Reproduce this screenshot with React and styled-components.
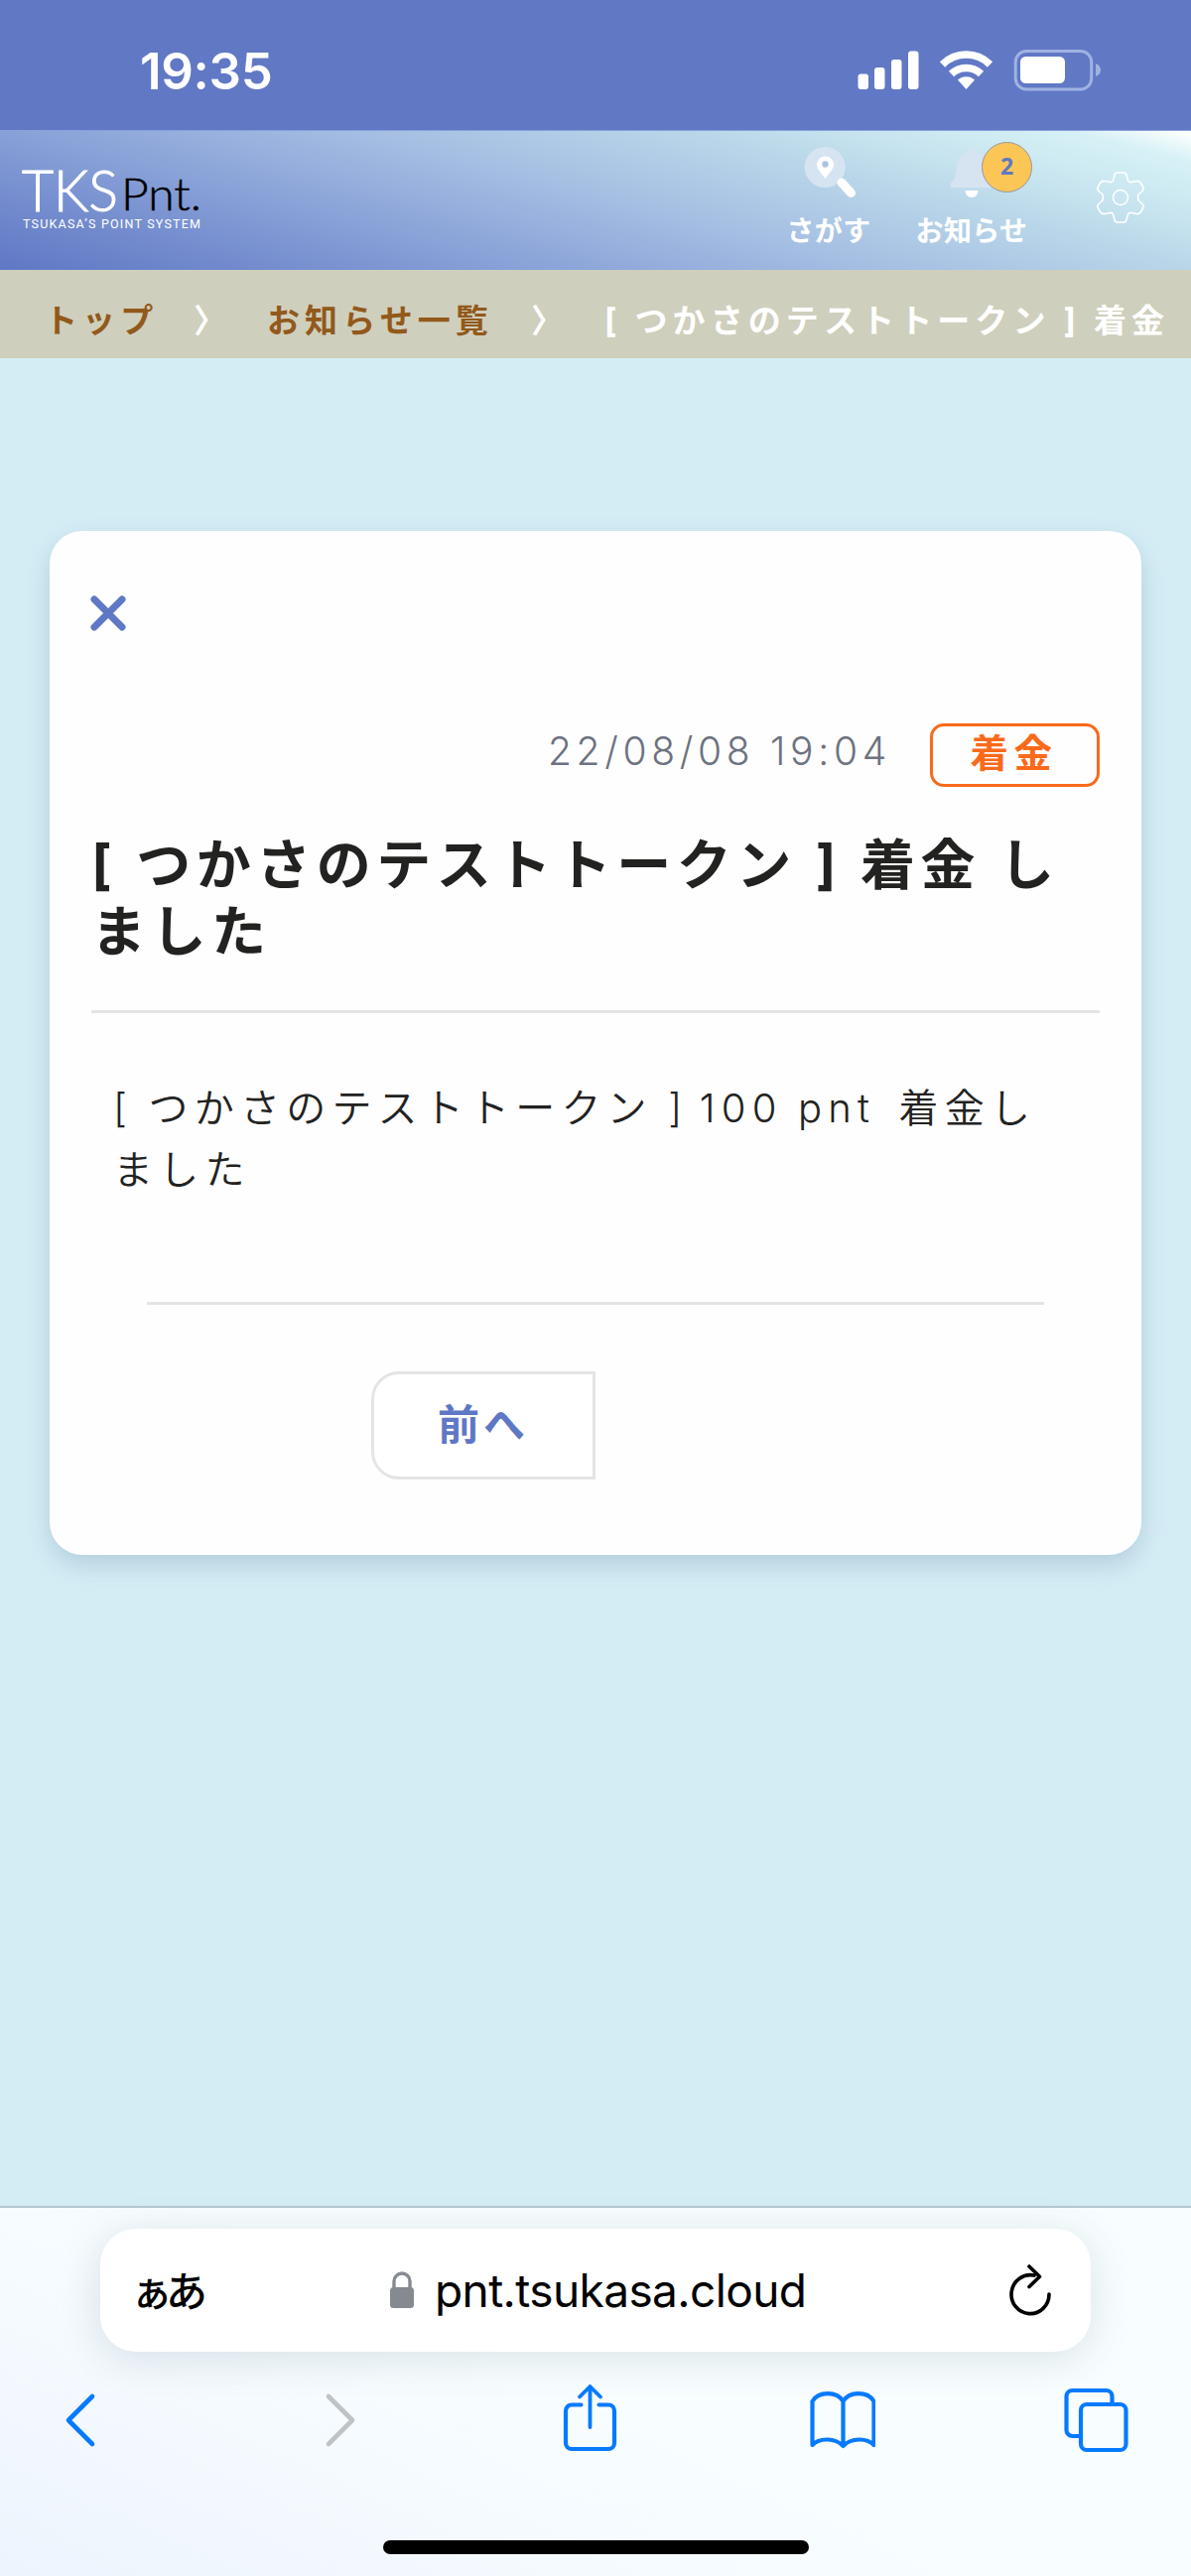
import React from "react";
import styled, { createGlobalStyle } from "styled-components";

const App = () => {
	return (
		<Page>
			<GlobalStyle />
			<StatusBar>
				<Clock>19:35</Clock>
				<StatusIcons />
			</StatusBar>

			<Header>
				<Logo />
				<Menu>
					<MenuItem width={80}>
						<SearchIcon />
						<MenuLabel>さがす</MenuLabel>
					</MenuItem>
					<MenuItem width={112}>
						<BellIcon />
						<MenuLabel>お知らせ</MenuLabel>
						<Count>2</Count>
					</MenuItem>
					<GearIcon />
				</Menu>
			</Header>

			<Breadcrumb>
				<Crumb width={150}>トップ</Crumb>
				<Crumb width={74} light>〉</Crumb>
				<Crumb width={266}>お知らせ一覧</Crumb>
				<Crumb width={74} light>〉</Crumb>
				<Crumb light>[ つかさのテストトークン ] 着金</Crumb>
			</Breadcrumb>

			<Main>
				<Card>
					<Close width="36" height="36" viewBox="0 0 36 36">
						<path d="M4 4L32 32M32 4L4 32" />
					</Close>
					<Meta>
						<DateText>22/08/08 19:04</DateText>
						<Tag>着金</Tag>
					</Meta>
					<Title>
						[ つかさのテストトークン ] 着金 し
						<br />
						ました
					</Title>
					<Body>
						[ つかさのテストトークン ] <Amount>100 pnt</Amount> 着金し
						<br />
						ました
					</Body>
					<Divider />
					<Pager>
						<PrevButton>前へ</PrevButton>
					</Pager>
				</Card>
			</Main>

			<Browser>
				<AddressBar>
					<TextSize>ぁあ</TextSize>
					<Address>
						<svg width="26" height="38" viewBox="0 0 26 38">
							<path d="M5 18V10a8 8 0 0 1 16 0v8" fill="none" stroke="#858a91" strokeWidth="3.4" />
							<rect x="1" y="16" width="24" height="21" rx="3.5" fill="#858a91" />
						</svg>
						<Url>pnt.tsukasa.cloud</Url>
					</Address>
					<svg width="46" height="54" viewBox="0 0 46 54">
						<Stroke d="M27 12.1A19 19.5 0 1 0 42 31M22 3L32.5 13.2L22 23.5" color="#000" weight={3.6} />
					</svg>
				</AddressBar>
				<Toolbar>
					<svg width="66" height="72" viewBox="-16 -1 66 72">
						<Stroke d="M29 13L5 37L29 61" weight={4.6} />
					</svg>
					<svg width="66" height="72" viewBox="-22 -1 66 72">
						<Stroke d="M5 13L29 37L5 61" color="#bfc3c5" weight={4.6} />
					</svg>
					<svg width="66" height="72" viewBox="-6.500 0 66 72">
						<Stroke d="M19 22.5H9.5a6 6 0 0 0-6 6V61a6 6 0 0 0 6 6h37a6 6 0 0 0 6-6V28.5a6 6 0 0 0-6-6H37" />
						<Stroke d="M28 45V4M17.5 14.5L28 4L38.5 14.5" weight={3.8} />
					</svg>
					<svg width="66" height="72" viewBox="1.500 0 66 72">
						<Stroke d="M35 19C29 8.5 10 8.5 4 19V63C11 55.500 27 55.500 35 64C43 55.500 59 55.500 66 63V19C60 8.500 41 8.500 35 19V64" />
					</svg>
					<svg width="66" height="72" viewBox="0.500 0 66 72">
						<Stroke d="M17 54H9a6 6 0 0 1-6-6V14a6 6 0 0 1 6-6H43a6 6 0 0 1 6 6V22" />
						<Stroke d="M23.500 22H57a6 6 0 0 1 6 6V62a6 6 0 0 1-6 6H23.500a6 6 0 0 1-6-6V28a6 6 0 0 1 6-6Z" />
					</svg>
				</Toolbar>
				<HomeBar />
			</Browser>
		</Page>
	);
};

export default App;

const StatusIcons = () => (
	<svg width="250" height="44" viewBox="864 49 250 44">
		<g fill="#fff">
			<rect x="864.500" y="74.500" width="10.500" height="15.500" rx="3" />
			<rect x="881" y="68" width="10.500" height="22" rx="3" />
			<rect x="898" y="60" width="10.500" height="30" rx="3" />
			<rect x="915" y="51.500" width="10.500" height="38.500" rx="3" />
			<path d="M973.500 90L965 80.500a12.500 12.500 0 0 1 17 0Z" />
			<rect x="1028" y="57" width="45" height="27" rx="5.500" />
		</g>
		<g fill="none" stroke="#fff" strokeWidth="7.500">
			<path d="M949.500 65a34 34 0 0 1 48 0" />
			<path d="M958.500 74.500a21.500 21.500 0 0 1 30 0" />
		</g>
		<rect x="1023.200" y="51.500" width="76.500" height="38.500" rx="11" fill="none" stroke="#a0b2e2" strokeWidth="3" />
		<path d="M1104 64v13q5-2 5-6.500t-5-6.500Z" fill="#a0b2e2" />
	</svg>
);

const Logo = () => (
	<LogoSvg width="184" height="66" viewBox="22 168 184 66">
		<LogoText x="22" y="213" size={57} textLength="97" lengthAdjust="spacingAndGlyphs" fill="#fff" stroke="#fff">
			TKS
		</LogoText>
		<LogoText x="122" y="212" size={45} textLength="81" lengthAdjust="spacingAndGlyphs" fill="#000" stroke="#000" strokeWidth="0.5">
			Pnt.
		</LogoText>
		<LogoText x="23" y="230" size={12.5} small textLength="179" fill="#fff">
			TSUKASA’S POINT SYSTEM
		</LogoText>
	</LogoSvg>
);

const SearchIcon = () => (
	<svg width="54" height="54" viewBox="808.500 147 54 54">
		<circle cx="831.700" cy="168.500" r="20.500" fill="#d6e4f2" />
		<path d="M848.500 184L858 194.500" stroke="#fff" strokeWidth="9" strokeLinecap="round" />
		<path
			d="M832 180C828 174 823.500 170.500 823.500 166a8.500 8.500 0 0 1 17 0C840.500 170.500 836 174 832 180Z"
			fill="#fff"
		/>
		<circle cx="832" cy="165.500" r="3.200" fill="#aac4e0" />
	</svg>
);

const BellIcon = () => (
	<svg width="54" height="54" viewBox="953 147 54 54">
		<path
			d="M980 148.500a3.500 3.500 0 0 1 3.500 4.500C991 155 995 161 995.500 170C996 179 998 182 1001 184.500V189H959V184.500C962 182 964 179 964.500 170C965 161 969 155 976.500 153a3.500 3.500 0 0 1 3.500-4.500Z"
			fill="#d6e4f2"
		/>
		<path d="M973.500 192h13a6.500 7 0 0 1-13 0Z" fill="#fff" />
	</svg>
);

const GearIcon = () => (
	<svg width="52" height="54" viewBox="-26 -27 52 54" fill="none" stroke="#fff" strokeWidth="1.600" strokeLinejoin="round">
		<path d="M-3-25H3Q5.500-25 6-22.500L7.500-17Q8.500-15 11-15.500L16-16.500Q19-17 20.500-14.500L22.500-11Q24-8.500 22-6.500L18-3Q17 0 18 3L22 6.500Q24 8.500 22.500 11L20.500 14.500Q19 17 16 16.500L11 15.500Q8.500 15 7.500 17L6 22.500Q5.500 25 3 25H-3Q-5.500 25-6 22.500L-7.500 17Q-8.500 15-11 15.500L-16 16.500Q-19 17-20.500 14.500L-22.500 11Q-24 8.500-22 6.500L-18 3Q-17 0-18-3L-22-6.500Q-24-8.500-22.500-11L-20.500-14.500Q-19-17-16-16.500L-11-15.500Q-8.500-15-7.500-17L-6-22.500Q-5.500-25-3-25Z" />
		<circle r="7.500" />
	</svg>
);

const GlobalStyle = createGlobalStyle`
	* {
		box-sizing: border-box;
	}

	body {
		margin: 0;
		font-family: "Inter", "Noto Sans CJK JP", sans-serif;
	}

	svg {
		display: block;
		flex-shrink: 0;
	}
`;

const Page = styled.div`
	width: 1200px;
	height: 2596px;
	display: flex;
	flex-direction: column;
	overflow: hidden;
	background-color: #d4edf5;
`;

const StatusBar = styled.div`
	height: 132px;
	padding: 49px 86px 0 141px;
	display: flex;
	justify-content: space-between;
	align-items: flex-start;
	background-color: #6178c5;
	border-bottom: 1px solid #8aa0dc;
`;

const Clock = styled.div`
	color: white;
	font-size: 51px;
	font-weight: 600;
	line-height: 46px;
	letter-spacing: -0.3px;
`;

const Header = styled.div`
	height: 140px;
	padding: 36px 45px 0 22px;
	display: flex;
	justify-content: space-between;
	align-items: flex-start;
	background: linear-gradient(
		15deg,
		#6078c5 0%,
		#6c84ca 10%,
		#87a0d7 30%,
		#a3bce2 50%,
		#b9d6e9 70%,
		#cdeaf2 85%,
		#d6f1f6 93%,
		#fff 100%
	);
`;

const LogoSvg = styled.svg`
	overflow: visible;
`;

const LogoText = styled.text.withConfig({
	shouldForwardProp: (prop) => !["size", "small"].includes(prop),
})`
	font-family: ${({ small }) => (small ? "Roboto" : "Lato")}, sans-serif;
	font-size: ${({ size }) => size}px;
	font-weight: ${({ small }) => (small ? 400 : 300)};
`;

const Menu = styled.div`
	display: flex;
	align-items: center;
	margin-top: -21px;
	gap: 48px;

	> svg {
		margin: -2px 0 0 20px;
	}
`;

const MenuItem = styled.div.withConfig({
	shouldForwardProp: (prop) => prop !== "width",
})`
	position: relative;
	width: ${({ width }) => width}px;
	display: flex;
	flex-direction: column;
	align-items: center;
`;

const MenuLabel = styled.div`
	margin-top: 12px;
	color: white;
	font-size: 28px;
	font-weight: 700;
	line-height: 40px;
	white-space: nowrap;
	letter-spacing: 0.4px;
`;

const Count = styled.div`
	position: absolute;
	top: -4px;
	left: 66px;
	width: 51px;
	height: 51px;
	border: 1px solid #9a95a0;
	border-radius: 50%;
	background-color: #fbc656;
	color: #5f78c5;
	font-family: "Open Sans", sans-serif;
	font-size: 23px;
	font-weight: 700;
	line-height: 46px;
	text-align: center;
`;

const Breadcrumb = styled.div`
	height: 89px;
	padding-left: 45px;
	display: flex;
	align-items: center;
	background-color: #cfcfbd;
`;

const Crumb = styled.span.withConfig({
	shouldForwardProp: (prop) => !["width", "light"].includes(prop),
})`
	flex-shrink: 0;
	padding-top: 8px;
	width: ${({ width }) => (width ? `${width}px` : "auto")};
	color: ${({ light }) => (light ? "#fff" : "#92591b")};
	font-size: 33px;
	font-weight: 700;
	letter-spacing: 5.1px;
	white-space: nowrap;
`;

const Main = styled.div`
	flex: 1;
	padding: 174px 50px 0;
`;

const Card = styled.div`
	height: 1032px;
	padding: 65px 42px 0;
	border-radius: 33px;
	background-color: #fefefe;
	box-shadow: 0 10px 24px rgba(80, 110, 150, 0.24);
`;

const Close = styled.svg`
	margin-left: -1px;
	fill: none;
	stroke: #5f78c5;
	stroke-width: 7px;
	stroke-linecap: round;
`;

const Meta = styled.div`
	margin-top: 93px;
	display: flex;
	justify-content: flex-end;
	align-items: center;
	gap: 39px;
`;

const DateText = styled.div`
	margin-top: -9px;
	color: #6c7280;
	font-size: 39px;
	font-weight: 300;
	letter-spacing: 4.7px;
`;

const Tag = styled.div`
	width: 171px;
	height: 64px;
	padding-right: 2px;
	border: 3px solid #f96a1b;
	border-radius: 14px;
	color: #f96a1b;
	font-size: 38.500px;
	font-weight: 700;
	line-height: 54px;
	letter-spacing: 5.500px;
	text-align: center;
`;

const Title = styled.h2`
	margin: 0;
	height: 228px;
	padding: 45px 0 0 0;
	border-bottom: 3px solid #e4e4e4;
	color: #222221;
	font-size: 55px;
	font-weight: 700;
	line-height: 67px;
	letter-spacing: 5.500px;
	word-spacing: 0.500px;
	white-space: nowrap;
`;

const Body = styled.div`
	height: 293px;
	padding: 65px 0 0 22px;
	color: #222221;
	font-size: 40px;
	font-weight: 350;
	line-height: 62px;
	letter-spacing: 6.200px;
	word-spacing: -2px;
	white-space: nowrap;
`;

const Amount = styled.span`
	margin: 0 8px 0 -4px;
`;

const Divider = styled.div`
	height: 3px;
	margin: -2px 56px 0;
	background-color: #e4e4e4;
`;

const Pager = styled.div`
	padding: 67px 0 0 282px;
	display: flex;
`;

const PrevButton = styled.button`
	width: 226px;
	height: 109px;
	padding: 0 0 8px;
	border: 3px solid #e4e4e4;
	border-radius: 28px 0 0 28px;
	background-color: white;
	color: #5f78c5;
	font-family: inherit;
	font-size: 42px;
	font-weight: 700;
	letter-spacing: 4px;
`;

const Browser = styled.div`
	height: 373px;
	padding: 21px 62px 0 48px;
	border-top: 2px solid #b4c8cf;
	background: linear-gradient(25deg, #eef4fd 0%, #f3f9fe 25%, #f8feff 50%);
`;

const AddressBar = styled.div`
	height: 124px;
	margin: 0 39px 0 53px;
	padding: 0 38px 0 31px;
	display: flex;
	align-items: center;
	border-radius: 36px;
	background-color: white;
	box-shadow: 0 6px 42px rgba(50, 70, 90, 0.15);
`;

const TextSize = styled.div`
	width: 260px;
	margin-top: -4px;
	color: black;
	font-size: 42px;
	font-weight: 500;
	letter-spacing: -7px;
`;

const Address = styled.div`
	flex: 1;
	display: flex;
	align-items: center;
	gap: 20px;
`;

const Url = styled.span`
	color: black;
	font-size: 46px;
	letter-spacing: -0.6px;
`;

const Toolbar = styled.div`
	margin-top: 31px;
	display: flex;
	justify-content: space-between;
`;

const Stroke = styled.path.withConfig({
	shouldForwardProp: (prop) => !["color", "weight"].includes(prop),
})`
	fill: none;
	stroke: ${({ color }) => color || "#067aff"};
	stroke-width: ${({ weight }) => weight || 4.2}px;
	stroke-linecap: round;
	stroke-linejoin: round;
`;

const HomeBar = styled.div`
	width: 429px;
	height: 14px;
	margin: 87px 0 0 338px;
	border-radius: 7px;
	background-color: black;
`;
